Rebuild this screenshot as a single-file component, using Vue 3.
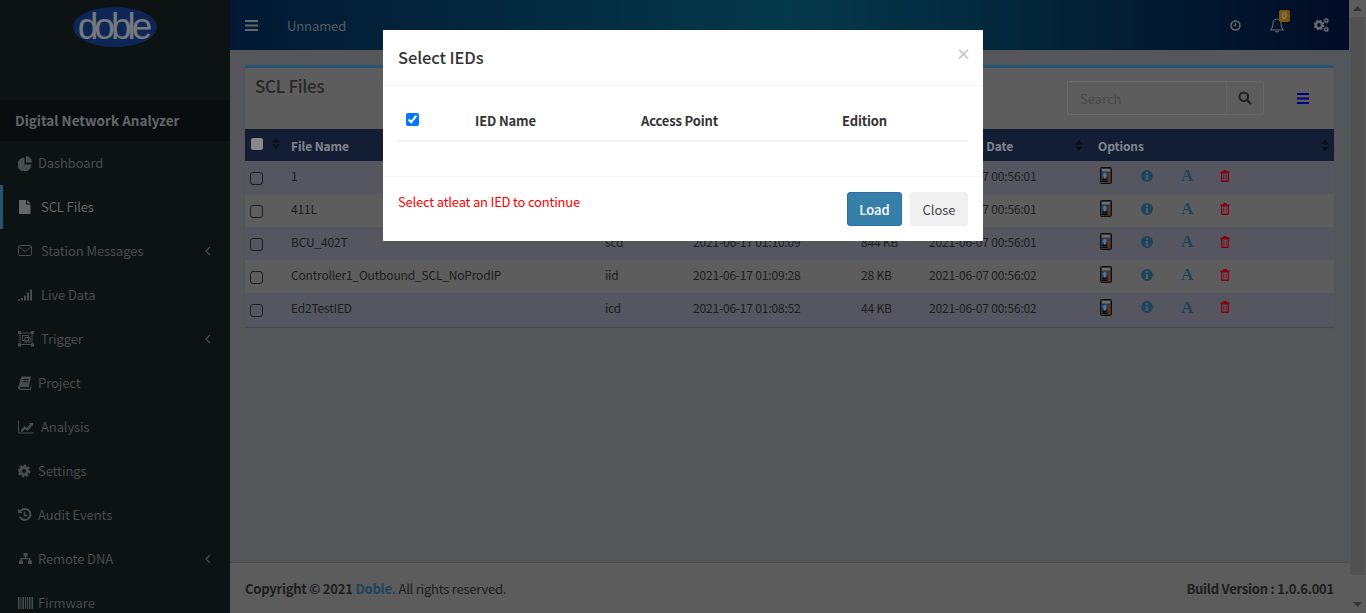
<template>
  <div class="page">
    <aside class="sidebar">
      <div class="logo-area">
        <div class="logo"><span class="logo-text">doble</span></div>
      </div>
      <div class="app-title">Digital Network Analyzer</div>
      <ul class="nav">
        <li v-for="item in navItems" :key="item.label" class="nav-item"
          :class="{ active: item.active, wide: item.wide }">
          <span class="nav-icon">
            <svg :width="item.w || 14" height="16" :viewBox="`0 0 ${item.w || 14} 16`" v-html="item.icon"></svg>
          </span>
          <span class="nav-label">{{ item.label }}</span>
          <svg v-if="item.sub" class="nav-arrow" width="6" height="10" viewBox="0 0 6 10">
            <path d="M5 1 1 5l4 4" fill="none" stroke="currentColor" stroke-width="1.2" />
          </svg>
        </li>
      </ul>
    </aside>

    <div class="main">
      <header class="topbar">
        <svg class="top-bars" width="13" height="11" viewBox="0 0 13 11">
          <path d="M0 0h13v2H0zM0 4.500h13v2H0zM0 9h13v2H0z" fill="currentColor" />
        </svg>
        <span class="project-name">Unnamed</span>
        <div class="top-icons">
          <svg class="top-clock" width="11" height="11" viewBox="0 0 11 11">
            <circle cx="5.500" cy="5.500" r="4.500" fill="none" stroke="currentColor" stroke-width="1.500" />
            <path d="M5.500 2.800v3H3.200" fill="none" stroke="currentColor" stroke-width="1.100" />
          </svg>
          <span class="bell">
            <svg width="14" height="15" viewBox="0 0 14 15">
              <path d="M7 1C4.500 1 3 3 3 5.500 3 9 2.200 10.500 .8 12h12.400C11.800 10.500 11 9 11 5.500 11 3 9.500 1 7 1Z"
                fill="none" stroke="currentColor" stroke-width="1.100" />
              <path d="M5.500 13a1.600 1.600 0 0 0 3 0" fill="none" stroke="currentColor" stroke-width="1.100" />
            </svg>
            <span class="badge">0</span>
          </span>
          <svg class="top-gears" width="15" height="14" viewBox="0 0 15 14">
            <circle cx="5" cy="7" r="3.100" fill="none" stroke="currentColor" stroke-width="2.400" />
            <circle cx="5" cy="7" r="4.500" fill="none" stroke="currentColor" stroke-width="1.800" stroke-dasharray="2 1.530" />
            <circle cx="12.300" cy="2.600" r="1.500" fill="none" stroke="currentColor" stroke-width="1.400" />
            <circle cx="12.300" cy="2.600" r="2.500" fill="none" stroke="currentColor" stroke-width=".9" stroke-dasharray="1.200 .76" />
            <circle cx="12.300" cy="11.400" r="1.500" fill="none" stroke="currentColor" stroke-width="1.400" />
            <circle cx="12.300" cy="11.400" r="2.500" fill="none" stroke="currentColor" stroke-width=".9" stroke-dasharray="1.200 .76" />
          </svg>
        </div>
      </header>

      <main class="content">
        <section class="box">
          <div class="box-header">
            <h3 class="box-title">SCL Files</h3>
            <div class="box-tools">
              <div class="search">
                <input class="search-input" type="text" placeholder="Search" />
                <button class="search-btn">
                  <svg width="14" height="14" viewBox="0 0 14 14">
                    <circle cx="5.800" cy="5.800" r="4.300" fill="none" stroke="currentColor" stroke-width="2" />
                    <path d="m9 9 4 4" stroke="currentColor" stroke-width="2.200" />
                  </svg>
                </button>
              </div>
              <svg class="tools-bars" width="12" height="11" viewBox="0 0 12 11">
                <path d="M0 0h12v2H0zM0 4.500h12v2H0zM0 9h12v2H0z" fill="currentColor" />
              </svg>
            </div>
          </div>
          <table class="files">
            <colgroup>
              <col style="width: 36px" />
              <col style="width: 314px" />
              <col style="width: 88px" />
              <col style="width: 168px" />
              <col style="width: 68px" />
              <col style="width: 169px" />
              <col />
            </colgroup>
            <thead>
              <tr>
                <th class="check-head">
                  <span class="head-check"></span>
                  <svg class="sort" width="8" height="11" viewBox="0 0 8 11">
                    <path d="M4 0 8 4.500H0zM4 11 0 6.500h8z" fill="currentColor" />
                  </svg>
                </th>
                <th v-for="col in columns" :key="col">
                  <span class="th-inner">
                    <span>{{ col }}</span>
                    <svg class="sort" width="8" height="11" viewBox="0 0 8 11">
                      <path d="M4 0 8 4.500H0zM4 11 0 6.500h8z" fill="currentColor" />
                    </svg>
                  </span>
                </th>
              </tr>
            </thead>
            <tbody>
              <tr v-for="file in files" :key="file.name">
                <td class="check-cell"><span class="row-check"></span></td>
                <td>{{ file.name }}</td>
                <td>{{ file.type }}</td>
                <td>{{ file.modified }}</td>
                <td>{{ file.size }}</td>
                <td>{{ file.created }}</td>
                <td>
                  <div class="options">
                    <svg class="opt-calc" width="12" height="17" viewBox="0 0 12 17">
                      <rect x=".5" y=".5" width="11" height="16" rx="1" fill="#55514e" stroke="#1c1c1c" />
                      <rect x="2" y="2" width="8" height="2.500" fill="#b9b9c4" />
                      <rect x="2" y="5.500" width="5.500" height="4.500" fill="#2f7fd0" />
                      <path d="M4.700 5.500 7 8.500H5.800v3H3.700v-3H2.500z" fill="#8fd0ff" />
                      <rect x="8.300" y="5.500" width="1.700" height="9.500" fill="#c0561c" />
                      <path d="M2 12h5.500v.8H2zM2 13.800h5.500v1.200H2zM3.500 11h.8v4h-.8zM5.500 11h.8v4h-.8z" fill="#15151a" />
                    </svg>
                    <svg class="opt-info" width="12" height="12" viewBox="0 0 12 12">
                      <path fill-rule="evenodd" d="M6 0a6 6 0 1 1 0 12A6 6 0 0 1 6 0ZM5 2v2h2V2ZM4.500 5v1H5v3h-.5v1h3V9H7V5Z" fill="currentColor" />
                    </svg>
                    <span class="opt-font">A</span>
                    <svg class="opt-trash" width="10" height="12" viewBox="0 0 10 12">
                      <path fill-rule="evenodd" d="M3.500 0h3l.6 1.500H10v1H9V11a1 1 0 0 1-1 1H2a1 1 0 0 1-1-1V2.500H0v-1h2.900ZM2.200 3.500v7h5.600v-7Z" fill="currentColor" />
                      <path d="M3.400 4.500h.8v5h-.8zM5.800 4.500h.8v5h-.8z" fill="currentColor" />
                    </svg>
                  </div>
                </td>
              </tr>
            </tbody>
          </table>
        </section>
      </main>

      <footer class="footer">
        <span><b>Copyright © 2021 <a class="footer-link">Doble.</a></b> All rights reserved.</span>
        <b>Build Version : 1.0.6.001</b>
      </footer>
    </div>

    <div class="scrollbar">
      <svg class="scroll-arrow" width="9" height="5" viewBox="0 0 9 5"><path d="M4.500 0 9 5H0z" fill="currentColor" /></svg>
      <div class="scroll-thumb"></div>
      <svg class="scroll-arrow" width="9" height="5" viewBox="0 0 9 5"><path d="M4.500 5 0 0h9z" fill="currentColor" /></svg>
    </div>

    <div class="scrim">
      <div class="modal">
        <div class="modal-header">
          <h4 class="modal-title">Select IEDs</h4>
          <span class="modal-close">×</span>
        </div>
        <div class="modal-body">
          <div class="ied-head">
            <input class="ied-check" type="checkbox" checked />
            <span>IED Name</span>
            <span>Access Point</span>
            <span>Edition</span>
          </div>
        </div>
        <div class="modal-footer">
          <span class="modal-error">Select atleat an IED to continue</span>
          <div class="modal-actions">
            <button class="btn btn-load">Load</button>
            <button class="btn btn-close">Close</button>
          </div>
        </div>
      </div>
    </div>
  </div>
</template>

<script setup>
const fill = 'fill="currentColor"'
const line = 'fill="none" stroke="currentColor"'

// 侧边栏菜单
const navItems = [
  { label: 'Dashboard', icon: `<path ${fill} d="M6.500 2.500v7h7A7 7 0 1 1 6.500 2.500Z"/><path ${fill} d="M8 1a6.500 6.500 0 0 1 6 6.500H8Z"/>` },
  { label: 'SCL Files', wide: true, active: true, icon: `<path ${fill} d="M1 1h7v4.500h4.500V15H1ZM9 1l3.500 3.500H9Z"/>` },
  { label: 'Station Messages', wide: true, sub: true, icon: `<rect ${line} x=".5" y="2.500" width="13" height="10" rx="1.200"/><path ${line} d="m1 4 6 4.500L13 4"/>` },
  { label: 'Live Data', wide: true, icon: `<path ${fill} d="M0 12h2v1.500H0zM3 11h2v2.500H3zM6 8.500h2v5H6zM9 5.500h2v8H9zM12 2.500h2v11h-2z"/>`, w: 15 },
  { label: 'Trigger', wide: true, sub: true, w: 16, icon: `<rect ${line} x="2" y="2" width="12" height="11.500"/><rect ${line} x="4.500" y="4.500" width="6" height="5"/><rect ${line} x="7" y="6.500" width="5" height="4.500"/><path ${fill} d="M0 0h3v3H0zM13 0h3v3h-3zM0 12.500h3v3H0zM13 12.500h3v3h-3z"/>` },
  { label: 'Project', icon: `<path ${fill} fill-rule="evenodd" d="M3.500 1.500H13l-.2 1.200-2 9.300H3c-.8 0-1.100.4-1 1 .1.500.5.800 1.100.800H12l.8-3.300 .9-.4-1 5H3c-1.800 0-3-1-3-2.500ZM5 4v1h5.500l.2-1Zm-.4 2.200v1h5.500l.2-1Z"/>` },
  { label: 'Analysis', wide: true, w: 16, icon: `<path ${line} d="M.5 1.500v12.500H16"/><path ${fill} d="m3 11 3.500-4 2.500 2 3-4-1.200-1H15v3.500l-1-1-4.500 5.500L7 10l-3 3H3Z"/>` },
  { label: 'Settings', icon: `<circle ${line} stroke-width="3" cx="6" cy="8" r="3.500"/><circle ${line} stroke-width="2.400" stroke-dasharray="2.200 1.800" cx="6" cy="8" r="5.300"/>` },
  { label: 'Audit Events', icon: `<path ${line} stroke-width="2" d="M2.500 4A5.500 5.500 0 1 1 2 10"/><path ${fill} d="M0 1.500 4.500 6H0Z"/><path ${line} stroke-width="1.500" d="M6.500 4.500V8.500H9.500"/>` },
  { label: 'Remote DNA', w: 15, sub: true, icon: `<path ${fill} d="M5.500 2h4v3.500h-1.500V7h4.500v2.500H14V13h-4V9.500h1V8.200H4v1.300h1V13H1V9.500h1.500V7H7V5.500H5.500Z"/>` },
  { label: 'Firmware', w: 15, icon: `<path ${fill} d="M0 2h1.500v12H0zM2.500 2h1v12h-1zM4.500 2h1.500v12H4.500zM7 2h1v12H7zM9 2h1v12H9zM11 2h1.500v12H11zM13.500 2H15v12h-1.500z"/>` }
]

const columns = ['File Name', 'Type', 'Modified Date', 'Size', 'Imported Date', 'Options']

const files = [
  { name: '1', type: 'scd', modified: '2021-06-17 01:12:40', size: '124 KB', created: '2021-06-07 00:56:01' },
  { name: '411L', type: 'cid', modified: '2021-06-17 01:11:22', size: '60 KB', created: '2021-06-07 00:56:01' },
  { name: 'BCU_402T', type: 'scd', modified: '2021-06-17 01:10:09', size: '844 KB', created: '2021-06-07 00:56:01' },
  { name: 'Controller1_Outbound_SCL_NoProdIP', type: 'iid', modified: '2021-06-17 01:09:28', size: '28 KB', created: '2021-06-07 00:56:02' },
  { name: 'Ed2TestIED', type: 'icd', modified: '2021-06-17 01:08:52', size: '44 KB', created: '2021-06-07 00:56:02' }
]
</script>

<style scoped>
.page {
  display: flex;
  width: 100%;
  height: 613px;
  overflow: hidden;
  font-family: "Noto Sans CJK SC", "Noto Sans", sans-serif;
  font-size: 13px;
  color: #444;
}

/* 侧边栏 */
.sidebar {
  flex: 0 0 230px;
  background: #161e21;
  overflow: hidden;
}

.logo-area {
  height: 100px;
  display: flex;
  justify-content: center;
  padding-top: 7px;
  box-sizing: border-box;
}

.logo {
  width: 84px;
  height: 40px;
  border-radius: 50%;
  background: #16408f;
  display: flex;
  align-items: center;
  justify-content: center;
}

.logo-text {
  font-family: "Liberation Sans", sans-serif;
  font-size: 37px;
  line-height: 40px;
  letter-spacing: -4px;
  margin-left: -4px;
  color: #c4c8d0;
}

.app-title {
  height: 41px;
  line-height: 41px;
  padding-left: 15px;
  background: #10161a;
  font-size: 13.500px;
  font-weight: 700;
  color: #a4abb0;
}

.nav {
  list-style: none;
  margin: 0;
  padding: 0;
}

.nav-item {
  height: 44px;
  display: flex;
  align-items: center;
  padding: 0 19px 0 18px;
  color: #777f84;
}

.nav-item.active {
  padding-left: 15px;
  border-left: 3px solid #3c8dbc;
  color: #a4abb0;
}

.nav-icon {
  flex: 0 0 20px;
  display: flex;
}

.nav-item.wide .nav-icon {
  flex-basis: 23px;
}

.nav-label {
  flex: 1;
  margin-top: -1px;
  font-size: 13px;
  letter-spacing: -.1px;
}

.nav-arrow {
  color: #777f84;
}

/* 主体 */
.main {
  flex: 1;
  min-width: 0;
  display: flex;
  flex-direction: column;
  background: #8c8f96;
}

.topbar {
  flex: 0 0 50px;
  display: flex;
  align-items: center;
  padding: 0 20px 0 15px;
  background: linear-gradient(90deg, #042b55 0%, #085f7b 50%, #03133f 100%);
  color: #a9b0b6;
}

.top-bars {
  margin-right: 29px;
}

.project-name {
  font-size: 13px;
  letter-spacing: -.1px;
  color: #8f9aa3;
}

.top-icons {
  margin-left: auto;
  display: flex;
  align-items: center;
}

.top-clock {
  margin-right: 29px;
}

.bell {
  position: relative;
  display: flex;
  margin-right: 30px;
}

.badge {
  position: absolute;
  top: -8px;
  left: 9px;
  width: 11px;
  height: 12px;
  border-radius: 2px;
  background: #d28a10;
  color: #ccc;
  font-size: 9px;
  font-weight: 700;
  line-height: 12px;
  text-align: center;
}

.content {
  flex: 1;
  padding: 15px;
}

.box {
  border-top: 3px solid #3c8dbc;
  border-radius: 3px 3px 0 0;
  background: #9c9c9c;
  box-shadow: 0 1px 1px rgba(0, 0, 0, .15);
}

.box-header {
  height: 61px;
  display: flex;
  justify-content: space-between;
  align-items: flex-start;
}

.box-title {
  margin: 4px 0 0 10px;
  font-size: 17px;
  font-weight: 500;
  line-height: 28px;
  letter-spacing: -.3px;
  color: #444;
}

.box-tools {
  display: flex;
  align-items: center;
  margin: 13px 25px 0 0;
}

.search {
  display: flex;
  height: 34px;
  margin-right: 33px;
}

.search-input {
  width: 159px;
  box-sizing: border-box;
  padding: 0 12px;
  border: 1px solid #b0b0b0;
  border-right: 0;
  background: #9c9c9c;
  font: inherit;
  font-size: 13px;
  outline: none;
}

.search-input::placeholder {
  color: #777;
}

.search-btn {
  width: 38px;
  padding: 0;
  border: 1px solid #aaa;
  border-radius: 0 3px 3px 0;
  background: #9c9c9c;
  color: #333;
  display: flex;
  align-items: center;
  justify-content: center;
}

.tools-bars {
  color: #0000d0;
}

/* 文件表格 */
.files {
  width: 100%;
  border-collapse: collapse;
  table-layout: fixed;
}

.files th {
  height: 32px;
  padding: 0 5px 0 10px;
  background: #203257;
  color: #d8dee8;
  font-size: 12px;
  font-weight: 700;
  letter-spacing: -.1px;
  text-align: left;
}

.th-inner {
  display: flex;
  align-items: center;
  justify-content: space-between;
}

.sort {
  color: #101828;
  flex: none;
}

.files th.check-head {
  padding: 0 1px 0 6px;
}

.check-head {
  white-space: nowrap;
}

.head-check {
  display: inline-block;
  width: 12px;
  height: 12px;
  margin: 0 9px 5px 0;
  border-radius: 2px;
  background: #e4e4e4;
  vertical-align: middle;
}

.files td {
  height: 33px;
  box-sizing: border-box;
  padding: 0 0 4px 10px;
  white-space: nowrap;
  overflow: hidden;
  color: #333;
  font-size: 12px;
  letter-spacing: -.18px;
}

.files tbody tr:nth-child(odd) {
  background: #8e8f9f;
}

.files tbody tr:nth-child(even) {
  background: #9c9c9c;
}

.files tbody tr:last-child {
  border-bottom: 1px solid #8a8a8a;
}

.files td.check-cell {
  padding: 2px 0 0 5px;
}

.row-check {
  display: block;
  width: 11px;
  height: 11px;
  border: 1px solid #333;
  border-radius: 3px;
}

.options {
  display: flex;
  align-items: center;
  padding-left: 2px;
}

.opt-info {
  margin-left: 29px;
  color: #2f7299;
}

.opt-font {
  width: 16px;
  margin-left: 26px;
  font-family: "Liberation Serif", serif;
  font-size: 17px;
  font-weight: 700;
  line-height: 17px;
  text-align: center;
  color: #2f7299;
}

.opt-trash {
  margin-left: 25px;
  color: #e00018;
}

.footer {
  flex: 0 0 50px;
  display: flex;
  justify-content: space-between;
  align-items: center;
  padding: 0 15px;
  border-top: 1px solid #828282;
  background: #999;
  font-size: 13px;
  letter-spacing: -.22px;
  color: #333;
}

.footer b {
  font-weight: 700;
}

.footer-link {
  color: #2f7299;
}

.scrollbar {
  flex: 0 0 17px;
  display: flex;
  flex-direction: column;
  align-items: center;
  background: #999;
  color: #555;
}

.scroll-arrow {
  flex: none;
  margin: 6px 0;
}

.scroll-thumb {
  flex: 1;
  width: 15px;
  margin-bottom: 21px;
  background: #878787;
}

/* 遮罩和弹窗 */
.scrim {
  position: fixed;
  inset: 0;
  display: flex;
  justify-content: center;
  align-items: flex-start;
  padding-top: 30px;
  background: rgba(0, 0, 0, .4);
}

.modal {
  width: 600px;
  background: #fff;
  color: #333;
}

.modal-header {
  height: 55px;
  display: flex;
  align-items: center;
  justify-content: space-between;
  padding: 0 15px;
  border-bottom: 1px solid #f4f4f4;
}

.modal-title {
  margin: -2px 0 0;
  font-size: 16.500px;
  font-weight: 500;
  letter-spacing: -.1px;
}

.modal-close {
  margin: -8px -3px 0 0;
  font-size: 15px;
  font-weight: 700;
  color: #c6c6c6;
}

.modal-body {
  height: 90px;
  padding: 15px 15px 0;
  box-sizing: border-box;
}

.ied-head {
  display: grid;
  grid-template-columns: 69px 166px 201px 1fr;
  align-items: center;
  height: 39px;
  padding-left: 8px;
  border-bottom: 2px solid #f4f4f4;
  font-size: 13px;
  font-weight: 700;
  letter-spacing: -.15px;
}

.ied-check {
  width: 13px;
  height: 13px;
  margin: 0 0 3px;
}

.modal-footer {
  height: 65px;
  display: flex;
  justify-content: space-between;
  align-items: flex-start;
  padding: 15px;
  box-sizing: border-box;
  border-top: 1px solid #f4f4f4;
}

.modal-error {
  font-size: 13px;
  letter-spacing: -.2px;
  color: #f00;
}

.modal-actions {
  display: flex;
  gap: 8px;
}

.btn {
  height: 34px;
  box-sizing: border-box;
  border-radius: 3px;
  font: inherit;
  font-size: 13px;
}

.btn-load {
  width: 55px;
  border: 1px solid #2e6da4;
  background: #367fa9;
  color: #fff;
  font-weight: 500;
}

.btn-close {
  width: 58px;
  border: 1px solid #f0f0f0;
  background: #f0f0f0;
  color: #444;
}
</style>
